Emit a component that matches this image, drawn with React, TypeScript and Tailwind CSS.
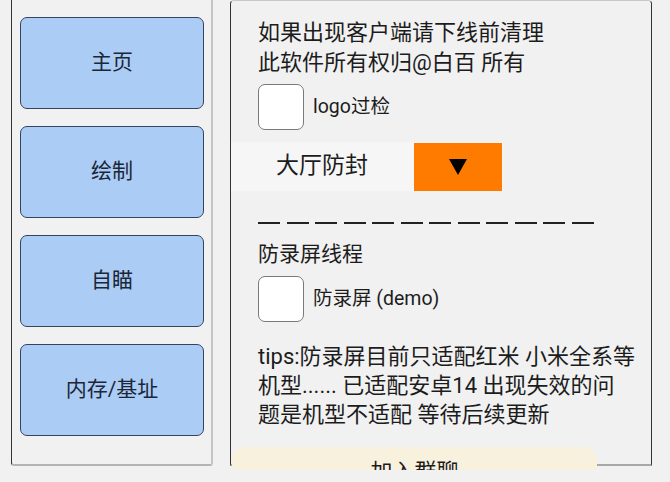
import React from "react";

const font = { fontFamily: 'Roboto, "Noto Sans CJK SC", sans-serif' };

function NavButton({ label }: { label: string }) {
  return (
    <div className="flex h-[92px] w-[184px] items-center justify-center rounded-[7px] border border-[#34445e] bg-[#abcdf5] text-[21px] text-[#1b2638]">
      {label}
    </div>
  );
}

function Check({ label }: { label: string }) {
  return (
    <div className="flex items-center gap-[9px]">
      <div className="h-[46px] w-[46px] rounded-[7px] border border-[#7a7a7a] bg-white" />
      <span className="text-[19.5px] text-[#1c1c1c]">{label}</span>
    </div>
  );
}

export default function App() {
  return (
    <div className="h-[482px] w-[670px] overflow-hidden bg-[#f1f1f1]" style={font}>
      <div className="relative h-[470px] overflow-hidden">
        <div className="flex pl-[11px]">
          <div className="flex h-[466px] w-[202px] flex-col gap-[17px] rounded-b-[3px] border-b-2 border-l border-r-2 border-b-[#b4b4b4] border-l-[#333] border-r-[#c4c4c4] px-[8px] pt-[17px]">
            <NavButton label="主页" />
            <NavButton label="绘制" />
            <NavButton label="自瞄" />
            <NavButton label="内存/基址" />
          </div>
          <div className="ml-[17px] flex h-[466px] w-[422px] flex-col rounded-t-[4px] border-x border-b-2 border-t border-x-[#333] border-b-[#a8a8a8] border-t-[#c8c8c8]">
            <div className="pl-[27px] pt-[17px] text-[22px] leading-[30px] text-[#1c1c1c]">
              <div>如果出现客户端请下线前清理</div>
              <div>此软件所有权归@白百 所有</div>
            </div>
            <div className="mt-[6px] pl-[27px]">
              <Check label="logo过检" />
            </div>
            <div className="mt-[12px] flex h-[49px] w-[272px] items-center bg-[#f6f6f6]">
              <span className="ml-[45px] w-[138px] text-[23px] text-[#1c1c1c]">大厅防封</span>
              <div className="flex h-[48px] w-[88px] items-center justify-center bg-[#ff7b00]">
                <svg width="20" height="18" viewBox="0 0 20 18">
                  <polygon points="1,1 19,1 10,17" fill="#000" />
                </svg>
              </div>
            </div>
            <div className="mt-[31px] flex gap-[6.5px] pl-[27px]">
              {Array.from({ length: 12 }).map((_, i) => (
                <span key={i} className="block h-[2px] w-[22px] bg-[#222]" />
              ))}
            </div>
            <div className="mt-[15px] pl-[27px] text-[21px] leading-[30px] text-[#1c1c1c]">防录屏线程</div>
            <div className="mt-[7px] pl-[27px]">
              <Check label="防录屏 (demo)" />
            </div>
            <div className="mt-[20px] whitespace-nowrap pl-[27px] text-[22px] leading-[29px] text-[#1c1c1c]">
              tips:防录屏目前只适配红米 小米全系等
              <br />
              机型...... 已适配安卓14 出现失效的问
              <br />
              题是机型不适配 等待后续更新
            </div>
          </div>
        </div>
        <div className="absolute left-[232px] top-[447px] flex h-[50px] w-[365px] justify-center rounded-t-[14px] bg-[#f8f1de] pt-[10px] text-[22px] leading-[30px] text-[#1c1c1c]">
          加入群聊
        </div>
      </div>
    </div>
  );
}
